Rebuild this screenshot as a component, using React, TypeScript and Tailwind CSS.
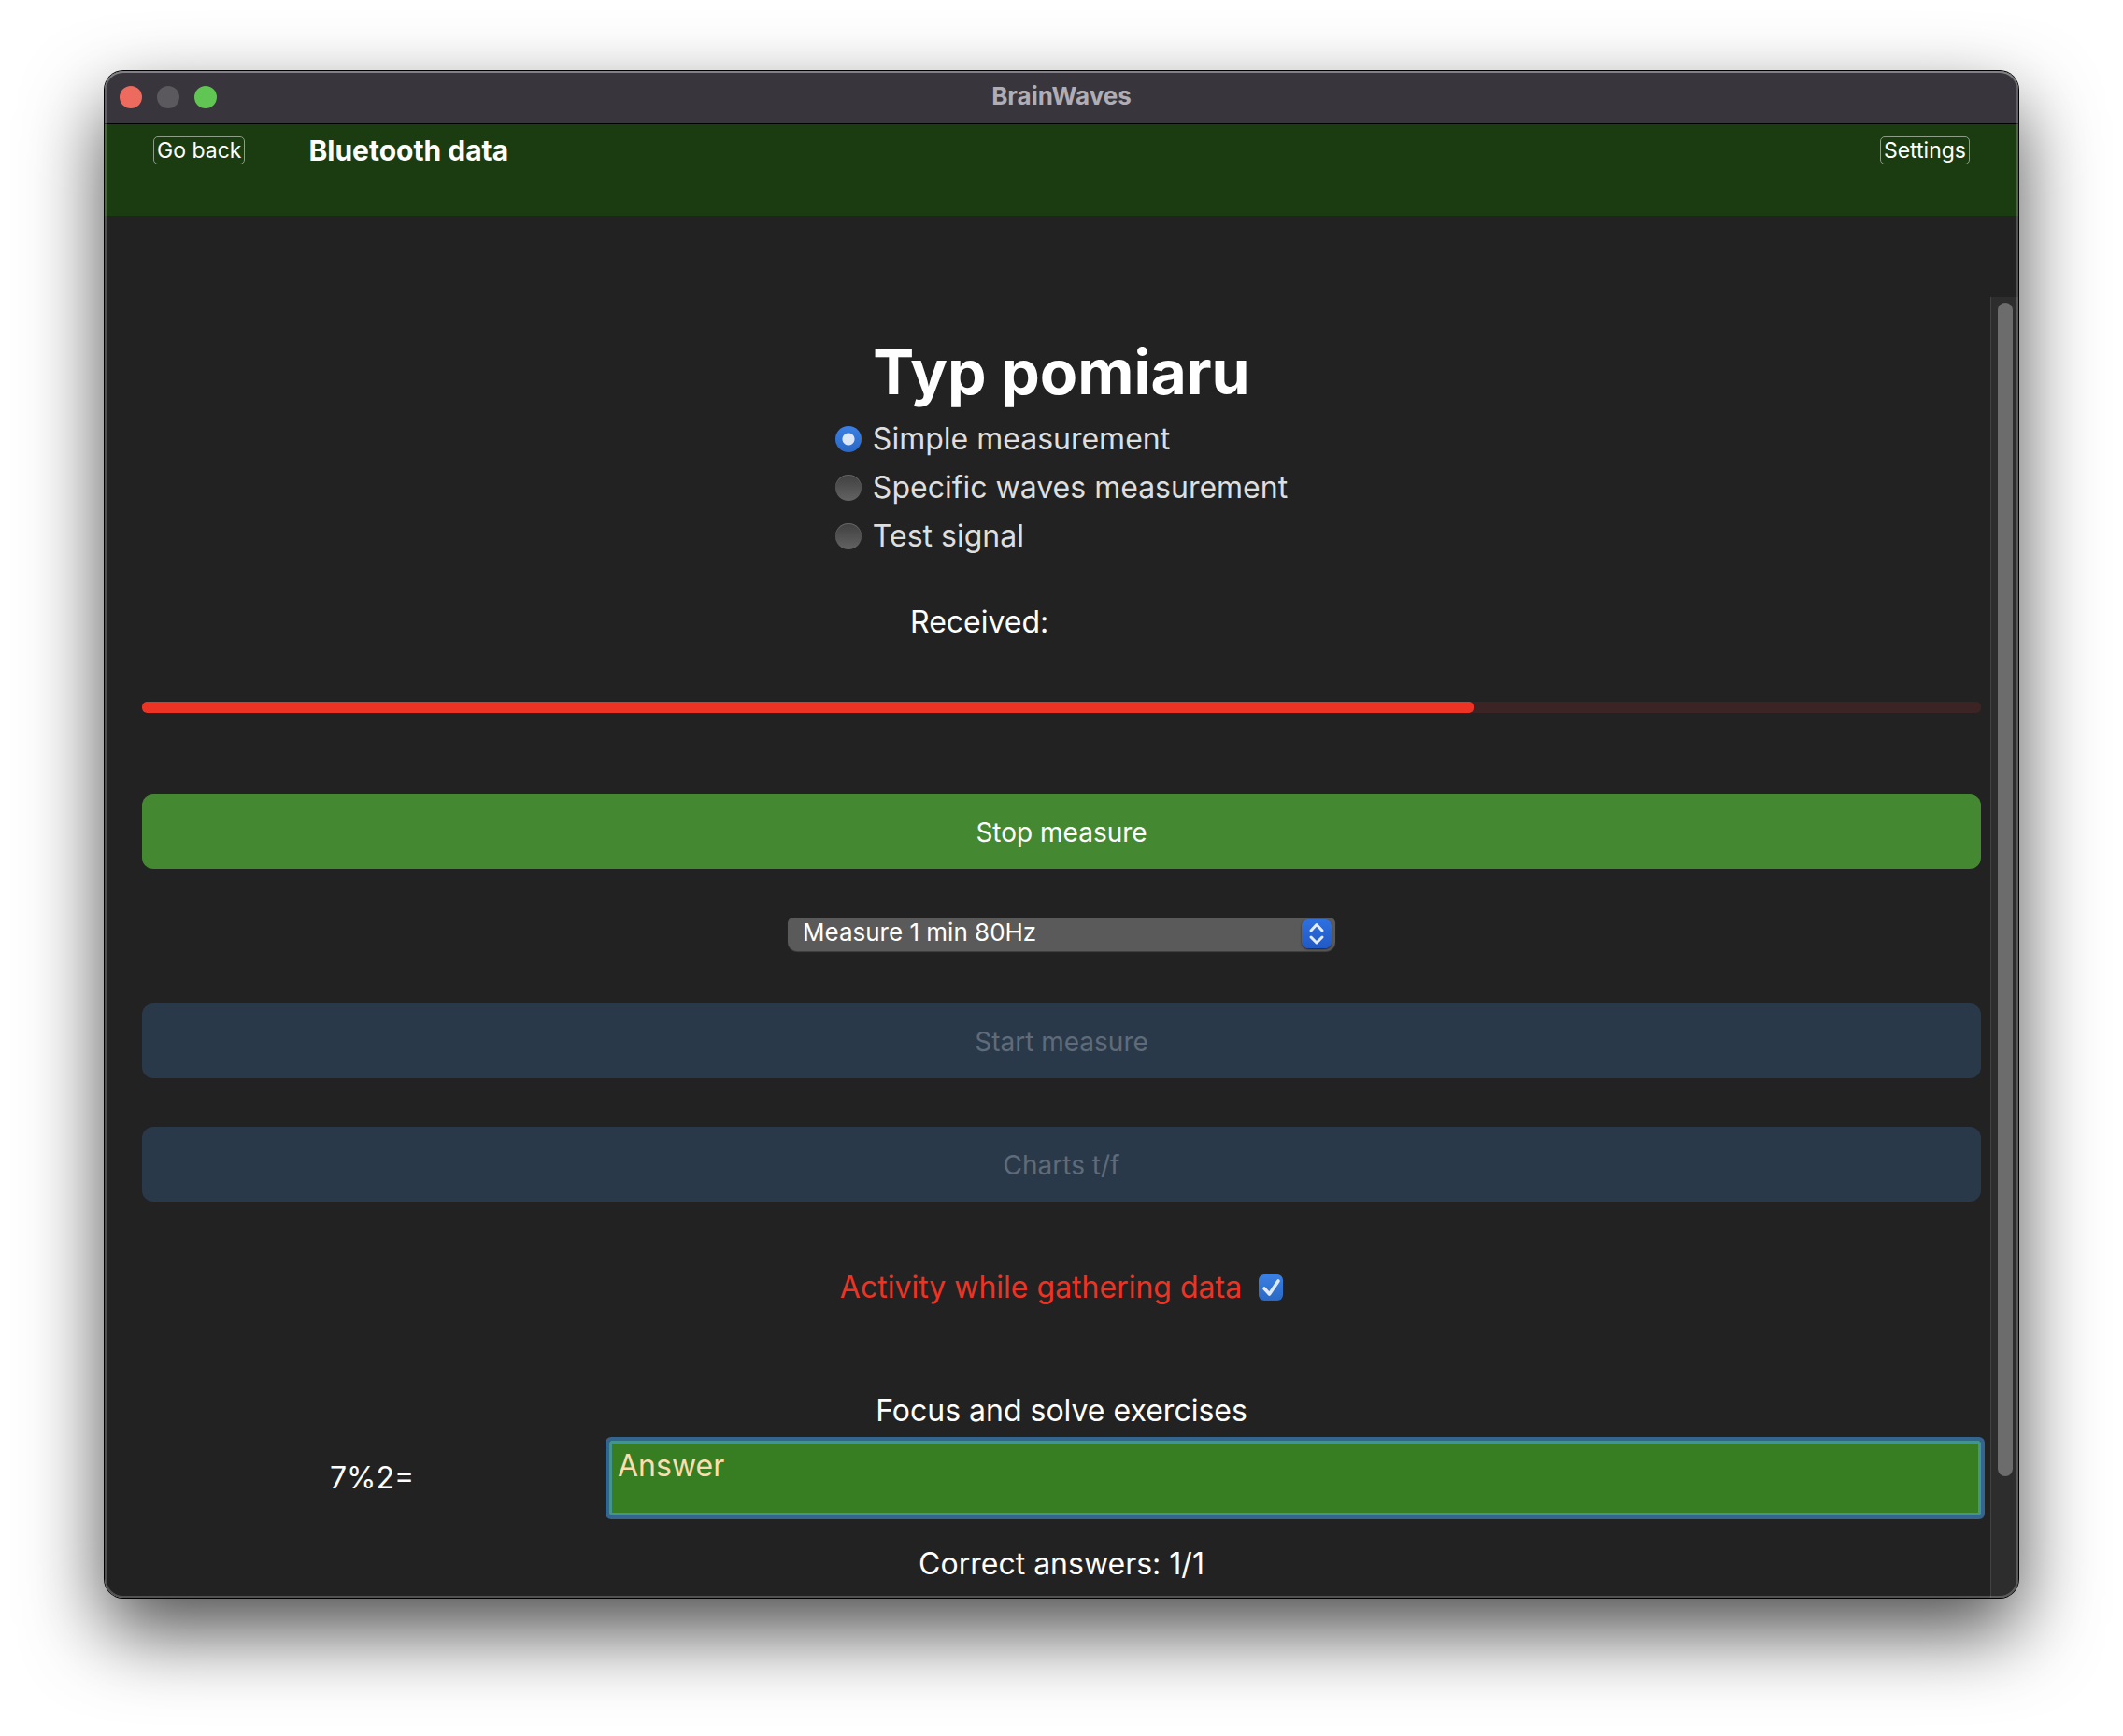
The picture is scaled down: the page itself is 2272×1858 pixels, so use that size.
import { useState } from "react";

const measurementTypes = ["Simple measurement", "Specific waves measurement", "Test signal"];

function TitleBar() {
  return (
    <div className="grid h-[57px] shrink-0 grid-cols-[1fr_auto_1fr] items-center border-b border-black bg-[#39353c] px-4">
      <div className="flex gap-4">
        <button type="button" aria-label="Close" className="size-6 rounded-full bg-[#ed6a5e]" />
        <button type="button" aria-label="Minimize" className="size-6 rounded-full bg-[#5b585e]" />
        <button type="button" aria-label="Zoom" className="size-6 rounded-full bg-[#61c554]" />
      </div>
      <span className="pb-0.5 text-[26px] leading-8 font-bold text-[#b1adb5]">BrainWaves</span>
    </div>
  );
}

function Header() {
  return (
    <header className="flex h-[98px] shrink-0 items-start justify-between bg-[#1a3c10] px-[52px] pt-[13px]">
      <div className="flex items-center gap-[68px]">
        <button type="button" className="h-[30px] rounded-[5px] border border-[#8d9e87] px-[3px] text-[23px] leading-7 text-white">
          Go back
        </button>
        <h1 className="text-[30px] leading-[30px] font-bold text-white">Bluetooth data</h1>
      </div>
      <button type="button" className="h-[30px] rounded-[5px] border border-[#8d9e87] px-[3px] text-[23px] leading-7 text-white">
        Settings
      </button>
    </header>
  );
}

function DurationSelect() {
  return (
    <div className="relative mx-auto mt-[52px] w-[586px]">
      <select
        aria-label="Measurement duration"
        className="block h-9 w-full appearance-none rounded-t-md rounded-b-[10px] bg-[#5a5a5a] pr-10 pb-[5px] pl-4 text-[26px] leading-[30px] text-white shadow-[0_1px_1px_#444]"
      >
        <option>Measure 1 min 80Hz</option>
      </select>
      <svg
        className="pointer-events-none absolute top-[2px] right-1 h-[31px] w-8 rounded-[7px] bg-linear-to-b from-[#2e70e0] to-[#2159c4] shadow-[0_1px_2px_#222]"
        viewBox="0 0 32 31"
        fill="none"
        stroke="#e4edfb"
        strokeWidth="3"
        strokeLinecap="round"
        strokeLinejoin="round"
      >
        <path d="M10 12 16 5.500 22 12M10 19 16 25 22 19" />
      </svg>
    </div>
  );
}

export default function App() {
  const [type, setType] = useState(0);
  const [activity, setActivity] = useState(true);
  const progress = 72.4;

  return (
    <div className="flex min-h-screen bg-white px-28 pt-[76px] pb-[148px] font-['Inter','Liberation_Sans',sans-serif]">
      <div className="relative flex flex-1 flex-col rounded-[20px] shadow-[0_0_0_1px_#000,0_36px_84px_rgba(0,0,0,0.7)]">
        <div className="flex flex-1 flex-col overflow-hidden rounded-[20px] bg-[#222222]">
          <TitleBar />
          <Header />
          <div className="mt-[87px] flex flex-1">
            <main className="min-w-0 flex-1 pr-[10px] pl-10 text-[32px] leading-10 text-white">
              <div role="radiogroup" aria-labelledby="type-heading" className="mx-auto w-fit pt-10">
                <h2 id="type-heading" className="text-center text-[66px] leading-[80px] font-bold">
                  Typ pomiaru
                </h2>
                <div className="mt-3 flex flex-col gap-3">
                  {measurementTypes.map((name, i) => (
                    <label key={name} className="flex items-center gap-3 text-[#dedede]">
                      <input
                        type="radio"
                        name="measurement"
                        checked={type === i}
                        onChange={() => setType(i)}
                        className="size-7 appearance-none rounded-full bg-linear-to-b from-[#404040] to-[#636363] shadow-[inset_0_1px_0_#666] checked:bg-[radial-gradient(circle,#dce8f8_6px,transparent_7px),linear-gradient(#3a80e4,#2a68c4)] checked:shadow-none"
                      />
                      {name}
                    </label>
                  ))}
                </div>
              </div>

              <p className="mx-auto mt-[52px] w-[324px]">Received:</p>

              <div
                role="progressbar"
                aria-label="Measurement progress"
                aria-valuenow={progress}
                className="mt-[65px] h-3 overflow-hidden rounded-[5px] bg-[#3b2423]"
              >
                <div className="h-full rounded-[5px] bg-[#ed3424]" style={{ width: `${progress}%` }} />
              </div>

              <button type="button" className="mt-[87px] block h-20 w-full rounded-xl bg-[#448832] pt-0.5 text-[28px]">
                Stop measure
              </button>
              <DurationSelect />
              <button type="button" disabled className="mt-14 block h-20 w-full rounded-xl bg-[#2a394a] pt-0.5 text-[28px] text-[#5f6b79]">
                Start measure
              </button>
              <button type="button" disabled className="mt-[52px] block h-20 w-full rounded-xl bg-[#2a394a] pt-0.5 text-[28px] text-[#5f6b79]">
                Charts t/f
              </button>

              <label className="mx-auto mt-[72px] flex w-fit items-center gap-[18px] text-[#ed3424]">
                Activity while gathering data
                <span className="relative flex">
                  <input
                    type="checkbox"
                    checked={activity}
                    onChange={() => setActivity(!activity)}
                    className="peer h-7 w-[26px] appearance-none rounded-md bg-[#505050] checked:bg-linear-to-b checked:from-[#3a80e4] checked:to-[#2a68c4]"
                  />
                  <svg
                    className="pointer-events-none absolute inset-0 hidden peer-checked:block"
                    viewBox="0 0 26 28"
                    fill="none"
                    stroke="#dfeafa"
                    strokeWidth="3.6"
                    strokeLinecap="round"
                    strokeLinejoin="round"
                  >
                    <path d="M6 15 11.500 21 21 7" />
                  </svg>
                </span>
              </label>

              <p className="mt-[92px] text-center">Focus and solve exercises</p>
              <div className="mt-3 flex items-center gap-2">
                <label htmlFor="answer" className="w-1/4 text-center">
                  7%2=
                </label>
                <input
                  id="answer"
                  placeholder="Answer"
                  className="h-20 min-w-0 flex-1 rounded-[2px] border-[3px] border-[#43938f] bg-[#377d22] px-1.5 pb-7 outline-4 outline-[#34658e] placeholder:text-[#fbdeb0]"
                />
              </div>
              <p className="mt-8 text-center">Correct answers: 1/1</p>
            </main>
            <div className="w-[30px] shrink-0 border-l border-[#424242] bg-[#2d2d2d] pt-1.5 pl-[7px]">
              <div className="h-[1256px] w-4 rounded-full bg-[#6c6c6c]" />
            </div>
          </div>
        </div>
        <div className="pointer-events-none absolute inset-0 rounded-[20px] shadow-[inset_0_0_0_2px_rgba(255,255,255,0.22),inset_0_2px_0_rgba(255,255,255,0.2)]" />
      </div>
    </div>
  );
}
